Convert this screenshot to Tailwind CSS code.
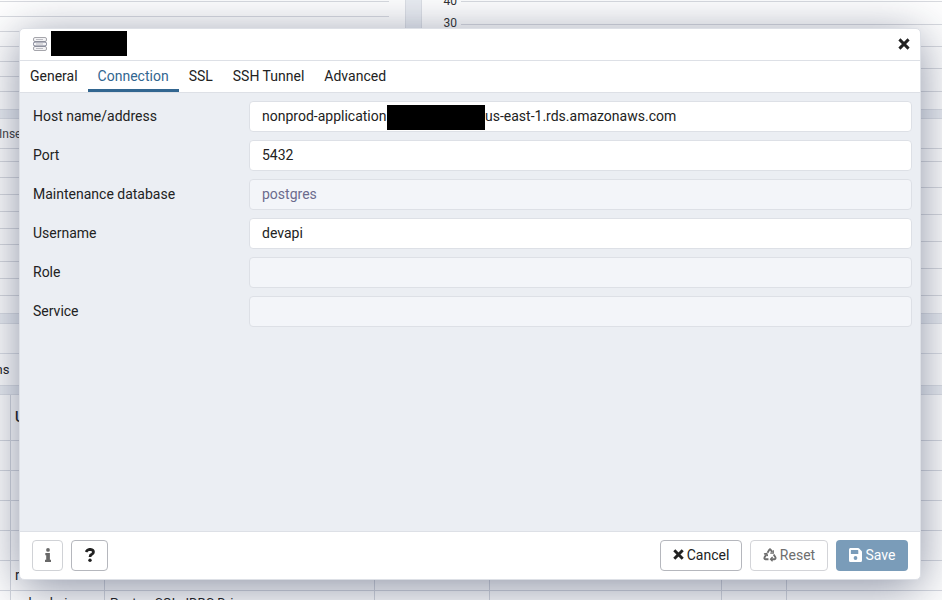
<!DOCTYPE html>
<html lang="en">
<head>
<meta charset="utf-8">
<title>Server</title>
<script src="https://cdn.jsdelivr.net/npm/@tailwindcss/browser@4"></script>
</head>
<body class="relative w-[942px] h-[600px] overflow-hidden bg-white text-sm text-[#222222] font-[Roboto,sans-serif]">
<!-- dashboard -->
<div class="flex flex-col w-full h-full overflow-hidden" aria-hidden="true">
  <div class="flex h-[110px] shrink-0 bg-[#ebeef3]">
    <div class="w-[406px] bg-white border-r border-b border-[#dde0e6] pt-px">
      <div class="w-[389px] text-[#d9dbe0]">
        <div class="h-[15px] border-t"></div><div class="h-[15px] border-t"></div><div class="h-[15px] border-t"></div><div class="h-[15px] border-t"></div><div class="h-[15px] border-t"></div><div class="h-[15px] border-t"></div><div class="h-[15px] border-t"></div>
      </div>
    </div>
    <div class="w-[15px]"></div>
    <div class="flex flex-1 bg-white border-l border-b border-[#dde0e6]">
      <div class="w-[35px] text-xs leading-[22px] text-right text-[#333]"><div class="-mt-[10px]">40</div><div>30</div></div>
      <div class="flex-1 ml-1 pt-px text-[#d9dbe0]">
        <div class="h-[23px] border-t"></div><div class="h-[22px] border-t"></div><div class="h-[22px] border-t"></div><div class="h-[23px] border-t"></div><div class="border-t"></div>
      </div>
    </div>
  </div>
  <div class="h-[9px] shrink-0 bg-[#ebeef3] border-b border-[#dde0e6]"></div>
  <div class="flex justify-between h-[195px] shrink-0 border-b border-[#dde0e6]">
    <div class="w-[405px] text-[#d9dbe0]">
      <div class="h-[29px] pt-[7px] text-xs leading-4 text-[#444]"><span class="-ml-px">Inserts</span></div>
      <div class="h-[13px] border-t"></div><div class="h-4 border-t"></div><div class="h-[17px] border-t"></div><div class="h-[17px] border-t"></div><div class="h-[17px] border-t"></div><div class="h-4 border-t"></div><div class="h-[17px] border-t"></div><div class="h-[17px] border-t"></div><div class="h-[17px] border-t"></div><div class="border-t"></div>
    </div>
    <div class="w-[521px] pt-[29px] text-[#d9dbe0]">
      <div class="h-[13px] border-t"></div><div class="h-[26px] border-t"></div><div class="h-[27px] border-t"></div><div class="h-[27px] border-t"></div><div class="h-[27px] border-t"></div><div class="h-[27px] border-t"></div><div class="border-t"></div>
    </div>
  </div>
  <div class="h-[10px] shrink-0 bg-[#ebeef3] border-b border-[#dde0e6]"></div>
  <div class="h-[29px] shrink-0"></div>
  <div class="h-[33px] shrink-0 border-y border-[#dde0e6] pt-[7px] leading-4"><span class="-ml-[43px] text-[13px]">Sessions</span></div>
  <div class="h-[9px] shrink-0 bg-[#ebeef3] border-b border-[#dde0e6]"></div>
  <div class="grid shrink-0 grid-cols-[11px_94px_270px_115px_232px_65px_1fr] grid-rows-[46px_30px_30px_30px_30px_30px_30px] text-[13px]">
    <div class="border-r border-b border-[#d6d9e0]"></div><div class="border-b border-[#d6d9e0] pl-1 pt-3 text-sm font-medium">User</div><div class="col-span-5 border-b border-[#d6d9e0]"></div>
    <div class="border-r border-b border-[#d6d9e0]"></div><div class="col-span-6 border-b border-[#d6d9e0]"></div>
    <div class="border-r border-b border-[#d6d9e0]"></div><div class="col-span-6 border-b border-[#d6d9e0]"></div>
    <div class="border-r border-b border-[#d6d9e0]"></div><div class="col-span-6 border-b border-[#d6d9e0]"></div>
    <div class="border-r border-b border-[#d6d9e0]"></div><div class="col-span-6 border-b border-[#d6d9e0]"></div>
    <div class="border-r border-b border-[#d6d9e0]"></div><div class="border-r border-b border-[#d6d9e0] pl-1 pt-1 text-sm">r</div><div class="border-r border-b border-[#d6d9e0]"></div><div class="border-r border-b border-[#d6d9e0]"></div><div class="border-r border-b border-[#d6d9e0]"></div><div class="border-r border-b border-[#d6d9e0]"></div><div class="border-b border-[#d6d9e0]"></div>
    <div class="border-r border-[#d6d9e0]"></div><div class="border-r border-[#d6d9e0] pl-[9px] pt-[3px] whitespace-nowrap">rdsadmin</div><div class="border-r border-[#d6d9e0] pl-[5px] pt-[3px]">PostgreSQL JDBC Driver</div><div class="border-r border-[#d6d9e0]"></div><div class="border-r border-[#d6d9e0]"></div><div class="border-r border-[#d6d9e0]"></div><div></div>
  </div>
</div>

<!-- dialog -->
<div role="dialog" class="absolute left-[19px] top-[28px] flex w-[902px] h-[552px] flex-col overflow-hidden rounded-[5px] border border-[#dde0e6] bg-white shadow-[0_8px_48px_rgba(24,36,72,0.5)]">
  <header class="flex h-8 shrink-0 items-center border-b border-[#dde0e6] pl-3 pr-[10px]">
    <svg class="-mt-px size-4" viewBox="0 0 16 16" fill="#f3f3f5" stroke="#a5a5ab" stroke-width="1"><rect x="1.5" y="1.500" width="13" height="4" rx="1.500"/><rect x="1.500" y="10.500" width="13" height="4" rx="1.500"/><rect x="1.500" y="6" width="13" height="4" rx="1.500" stroke="#777b8d"/><path d="M4 3.500h7M4 8h7M4 12.500h7" stroke="#bdbdc3"/></svg>
    <div class="ml-[3px] h-[25px] w-[76px] -mt-[2px] bg-black"></div>
    <svg class="-mt-[2px] ml-auto size-[12px]" viewBox="0 0 12 12" stroke="#222" stroke-width="2.9"><path d="M1.400 1.400l9.200 9.200M10.600 1.400l-9.200 9.200"/></svg>
  </header>
  <nav class="flex h-8 shrink-0 border-b border-[#dde0e6] leading-[30px]">
    <span class="px-[10px]">General</span>
    <span class="-mb-px h-[31px] border-b-3 border-[#326690] px-[10px] text-[#326690]">Connection</span>
    <span class="px-[10px]">SSL</span>
    <span class="px-[10px]">SSH Tunnel</span>
    <span class="px-[10px]">Advanced</span>
  </nav>
  <main class="grid flex-1 auto-rows-[31px] grid-cols-[216px_663px] content-start gap-y-2 bg-[#ebeef3] pl-[13px] pt-2 leading-[31px]">
    <label>Host name/address</label>
    <div class="flex h-[31px] rounded border border-[#dde0e6] bg-white pl-3 leading-[29px]"><span class="w-[125px]">nonprod-application</span><span class="mt-[3px] h-[25px] w-[98px] bg-black"></span><span>us-east-1.rds.amazonaws.com</span></div>
    <label>Port</label>
    <div class="h-[31px] rounded border border-[#dde0e6] bg-white pl-3 leading-[29px]">5432</div>
    <label>Maintenance database</label>
    <div class="h-[31px] rounded border border-[#dde0e6] bg-[#f3f5f9] pl-3 leading-[29px] text-[#6b6b8d]">postgres</div>
    <label>Username</label>
    <div class="h-[31px] rounded border border-[#dde0e6] bg-white pl-3 leading-[29px]">devapi</div>
    <label>Role</label>
    <div class="h-[31px] rounded border border-[#dde0e6] bg-[#f3f5f9]"></div>
    <label>Service</label>
    <div class="h-[31px] rounded border border-[#dde0e6] bg-[#f3f5f9]"></div>
  </main>
  <footer class="flex h-12 shrink-0 items-center border-t border-[#dde0e6] px-3">
    <button class="flex h-[31px] w-[31px] items-center justify-center rounded border border-[#d0d2d6] pb-px"><svg class="h-[14px] w-[6px]" viewBox="0 0 6 14" fill="#686868"><circle cx="3" cy="1.900" r="1.900"/><path d="M.3 5h4.600v6.700H6V14H0v-2.300h1.200V7.300H.3z"/></svg></button>
    <button class="ml-2 flex h-[31px] w-[37px] items-center justify-center rounded border border-[#b5b7bd] pb-px"><svg class="h-[14px] w-[10px]" viewBox="0 0 10 14" fill="none"><path d="M1 4Q2.200 1.300 5 1.300Q8.500 1.500 8.500 4Q8.500 5.400 6.800 6.300Q5 7.200 5 9" stroke="#222" stroke-width="2.700"/><circle cx="5" cy="12.200" r="1.700" fill="#222"/></svg></button>
    <button class="ml-auto flex h-[31px] w-[82px] items-center justify-center gap-[3px] rounded border border-[#b5b7bd] pb-[2px]"><svg class="size-[11px]" viewBox="0 0 12 12" stroke="#222" stroke-width="3.200"><path d="M1.400 1.400l9.200 9.200M10.600 1.400l-9.200 9.200"/></svg>Cancel</button>
    <button class="ml-2 flex h-[31px] w-[78px] items-center justify-center gap-[3px] rounded border border-[#d3d4d8] pb-[2px] text-[#6e6e6e]"><svg class="size-[14px]" viewBox="0 0 512 512" fill="none" stroke="#6e6e6e" stroke-width="68"><path d="M165 170l65-105q26-35 52 0l55 88M390 235l65 105q20 62-35 70H290M200 410H90q-60-10-32-70l70-115"/><path d="M375 80v110H265M350 330l-75 80 75 75M35 220l105-20 25 100" stroke-width="48"/></svg>Reset</button>
    <button class="ml-2 flex h-[31px] w-[72px] items-center justify-center gap-1 rounded bg-[#7a9cb9] pb-[2px] text-white"><svg class="h-[14px] w-[13px]" viewBox="0 32 448 448" preserveAspectRatio="none" fill="white"><path fill-rule="evenodd" d="M434 130l-84-84a48 48 0 0 0-34-14H48A48 48 0 0 0 0 80v352a48 48 0 0 0 48 48h352a48 48 0 0 0 48-48V164a48 48 0 0 0-14-34zM224 416a64 64 0 1 1 0-128 64 64 0 0 1 0 128zm96-305v101a12 12 0 0 1-12 12H76a12 12 0 0 1-12-12V108a12 12 0 0 1 12-12h229q15 0 15 15z"/></svg>Save</button>
  </footer>
</div>
</body>
</html>
